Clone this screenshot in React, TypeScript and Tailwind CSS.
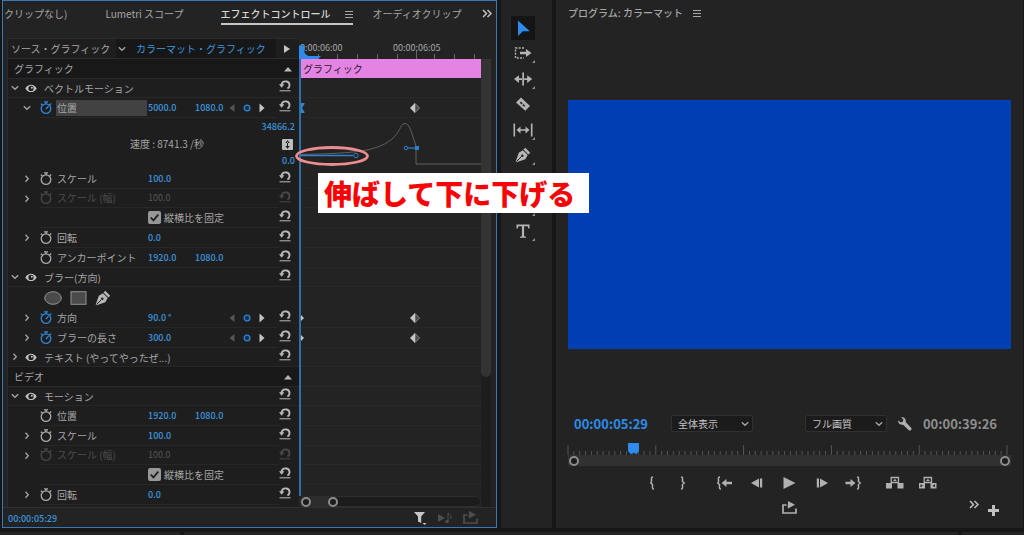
import React from "react";

type Kind = "header" | "section" | "prop" | "graph" | "check" | "masks";

interface Row {
  id: string;
  kind: Kind;
  label?: string;
  open?: boolean;
  arrow?: boolean;
  values?: string[];
  animated?: boolean;
  dim?: boolean;
  selected?: boolean;
  keys?: "bezier" | "linear";
}

const rows: Row[] = [
  { id: "g", kind: "header", label: "グラフィック" },
  { id: "vm", kind: "section", label: "ベクトルモーション", open: true },
  { id: "vpos", kind: "prop", label: "位置", open: true, arrow: true, values: ["5000.0", "1080.0"], animated: true, selected: true, keys: "bezier" },
  { id: "graph", kind: "graph" },
  { id: "vscale", kind: "prop", label: "スケール", arrow: true, values: ["100.0"] },
  { id: "vscalew", kind: "prop", label: "スケール (幅)", arrow: true, values: ["100.0"], dim: true },
  { id: "vlock", kind: "check", label: "縦横比を固定" },
  { id: "vrot", kind: "prop", label: "回転", arrow: true, values: ["0.0"] },
  { id: "vanchor", kind: "prop", label: "アンカーポイント", values: ["1920.0", "1080.0"] },
  { id: "blur", kind: "section", label: "ブラー(方向)", open: true },
  { id: "masks", kind: "masks" },
  { id: "bdir", kind: "prop", label: "方向", arrow: true, values: ["90.0 °"], animated: true, keys: "linear" },
  { id: "blen", kind: "prop", label: "ブラーの長さ", arrow: true, values: ["300.0"], animated: true, keys: "linear" },
  { id: "text", kind: "section", label: "テキスト (やってやったぜ...)" },
  { id: "v", kind: "header", label: "ビデオ" },
  { id: "motion", kind: "section", label: "モーション", open: true },
  { id: "mpos", kind: "prop", label: "位置", values: ["1920.0", "1080.0"] },
  { id: "mscale", kind: "prop", label: "スケール", arrow: true, values: ["100.0"] },
  { id: "mscalew", kind: "prop", label: "スケール (幅)", arrow: true, values: ["100.0"], dim: true },
  { id: "mlock", kind: "check", label: "縦横比を固定" },
  { id: "mrot", kind: "prop", label: "回転", arrow: true, values: ["0.0"] },
  { id: "manchor", kind: "prop" },
];

function rowHeight(r: Row) {
  if (r.kind === "graph") return "h-[51px]";
  if (r.kind === "masks") return "h-[21px]";
  if (r.kind === "section" || r.dim) return "h-[19px]";
  return "h-5";
}

const Chevron = ({ open }: { open?: boolean }) => (
  <svg viewBox="0 0 12 12" className="size-3 shrink-0" fill="none" stroke="#a6a6a6" strokeWidth="1.3">
    {open ? <path d="M2.8 4.3 6 7.3l3.2-3" /> : <path d="M4.5 2.8 7.3 5.8 4.5 8.8" />}
  </svg>
);

const Eye = () => (
  <svg viewBox="0 0 12 12" className="size-3" fill="none">
    <path d="M.3 6.4C3 1.6 9 1.6 11.700 6.400 9 11.200 3 11.200 .3 6.400Z" fill="#c2c2c2" />
    <circle cx="6" cy="6.400" r="2.600" fill="#1d1d1d" />
    <circle cx="6.800" cy="5.800" r="1" fill="#c2c2c2" />
  </svg>
);

const Stopwatch = ({ on }: { on?: boolean }) => (
  <svg viewBox="0 0 12 14" className="h-3.5 w-3" fill="none" stroke={on ? "#2f86d6" : "#a9a9a9"} strokeWidth="1.3">
    <circle cx="6" cy="7.600" r="4.800" />
    <path d="M4 .9h4M6 .9v2M.8 2.700l1.700 1.300M9.600 4 11.200 2.600" />
    {on && <path d="M6 8 8.500 5.300" />}
  </svg>
);

const Reset = ({ dim }: { dim?: boolean }) => (
  <svg viewBox="0 0 12 12" className="size-3" fill="none" stroke={dim ? "#484848" : "#b8b8b8"} strokeWidth="1.4">
    <path d="M2.300 5C3 2.300 5.200 1 7.600 1.500 11 2.300 11.600 6.700 8.400 8.500" strokeWidth="1.900" />
    <path d="M0 4.200h5.400L2.600 7.800Z" fill={dim ? "#484848" : "#b8b8b8"} stroke="none" />
    <path d="M.5 10.800h11" strokeWidth="1" />
  </svg>
);

const KeyNav = () => (
  <div className="flex items-center justify-between">
    <button aria-label="前のキーフレーム">
      <svg viewBox="0 0 6 10" className="h-2.5 w-1.5"><path d="M5.500 1v8L.5 5Z" fill="#555" /></svg>
    </button>
    <button aria-label="キーフレームを追加">
      <svg viewBox="0 0 8 8" className="size-2"><circle cx="4" cy="4" r="2.900" fill="#14304d" stroke="#2f86d6" strokeWidth="1.300" /></svg>
    </button>
    <button aria-label="次のキーフレーム">
      <svg viewBox="0 0 6 10" className="h-2.5 w-1.5"><path d="M.5 .500v9L5.500 5Z" fill="#c4c4c4" /></svg>
    </button>
  </div>
);

const Pen = ({ className }: { className?: string }) => (
  <svg viewBox="0 0 16 16" className={className}>
    <path d="M10.300 .800 15.200 5.700 13.400 7.500 8.500 2.600Z" fill="#b6b6b6" />
    <path d="M7.900 3.300 12.700 8.100 10.300 12.200 1.500 15.300 .7 14.500 3.800 5.700Z" fill="#b6b6b6" />
    <path d="M1.500 14.500 6.500 9.500" stroke="#202020" strokeWidth="1" />
    <circle cx="7.300" cy="8.700" r="1.200" fill="#202020" />
  </svg>
);

const ResetButton = ({ dim }: { dim?: boolean }) => (
  <button aria-label="リセット" className="pb-1" disabled={dim}>
    <Reset dim={dim} />
  </button>
);

function ListRow({ row }: { row: Row }) {
  const h = rowHeight(row);
  if (row.kind === "header") {
    return (
      <div className={`${h} flex shrink-0 items-center justify-between border-b border-[#292929] bg-[#181818] pl-1.5 pr-1.5`}>
        <span>{row.label}</span>
        <svg viewBox="0 0 10 6" className="h-1.5 w-2.5"><path d="M1 5.500h8L5 1Z" fill="#b8b8b8" /></svg>
      </div>
    );
  }
  if (row.kind === "section") {
    return (
      <div className={`${h} flex shrink-0 items-center border-b border-[#272727] pl-px pr-2`}>
        <button aria-label="展開" className="mr-1"><Chevron open={row.open} /></button>
        <button aria-label="表示" className="mr-[7px]"><Eye /></button>
        <span className="flex-1 whitespace-nowrap">{row.label}</span>
        <ResetButton />
      </div>
    );
  }
  if (row.kind === "graph") {
    return (
      <div className={`${h} flex shrink-0 items-stretch justify-between pl-[122px] pr-1`}>
        <div className="flex items-center">速度 : 8741.3 /秒</div>
        <div className="flex flex-col items-end justify-between pt-px text-[9px] font-medium leading-4 text-[#3d96de]">
          <span>34866.2</span>
          <svg viewBox="0 0 11 11" className="mr-0.5 size-[11px]">
            <rect width="11" height="11" rx="1" fill="#bdbdbd" />
            <path d="M5.500 1.300 3.300 4h4.400ZM5.500 9.700 3.300 7h4.400ZM5 3h1v5H5Z" fill="#1d1d1d" />
          </svg>
          <span>0.0</span>
        </div>
      </div>
    );
  }
  if (row.kind === "check") {
    return (
      <div className={`${h} flex shrink-0 items-center pl-8 pr-2`}>
        <div className="flex h-full flex-1 items-center border-b border-[#272727] pl-[108px]">
          <label className="flex items-center gap-[3px]">
            <span className="relative flex">
              <input type="checkbox" defaultChecked className="size-[13px] appearance-none rounded-[2px] bg-[#979797]" />
              <svg viewBox="0 0 12 12" className="pointer-events-none absolute inset-0 size-[13px]" fill="none" stroke="#1d1d1d" strokeWidth="1.600">
                <path d="M2.500 6 5 8.700 9.500 3.300" />
              </svg>
            </span>
            {row.label}
          </label>
        </div>
        <ResetButton />
      </div>
    );
  }
  if (row.kind === "masks") {
    return (
      <div className={`${h} flex shrink-0 items-center gap-2 pl-9`}>
        <button aria-label="楕円形マスク">
          <svg viewBox="0 0 18 14" className="h-3.5 w-[18px]"><ellipse cx="9" cy="7" rx="8.300" ry="6.300" fill="#4a4a4a" stroke="#929292" /></svg>
        </button>
        <button aria-label="長方形マスク">
          <svg viewBox="0 0 17 14" className="h-3.5 w-[17px]"><rect x="1" y=".7" width="15" height="12.600" fill="#4a4a4a" stroke="#929292" /></svg>
        </button>
        <button aria-label="ペンマスク"><Pen className="size-4" /></button>
      </div>
    );
  }
  return (
    <div className={`${h} flex shrink-0 items-center pl-[13px] pr-2 ${row.dim ? "text-[#4d4d4d]" : ""}`}>
      <div className="mr-[7px] size-3">
        {row.arrow && <button aria-label="展開" className="flex"><Chevron open={row.open} /></button>}
      </div>
      <div className="flex h-full flex-1 items-center border-b border-[#272727]">
        <button aria-label="アニメーションのオン/オフ" className={`mr-1 ${row.dim ? "opacity-30" : ""}`}>
          <Stopwatch on={row.animated} />
        </button>
        <span className={`w-[91px] whitespace-nowrap pl-px leading-4 ${row.selected ? "bg-[#424242]" : ""}`}>{row.label}</span>
        <div className={`flex flex-1 pl-px text-[9px] ${row.dim ? "text-[#555]" : "font-medium text-[#3d96de]"}`}>
          {row.values?.map((v, i) => (
            <button key={i} className="w-[47px] text-left leading-4">{v}</button>
          ))}
        </div>
      </div>
      {row.animated && <div className="-ml-12 mr-3.5 w-9"><KeyNav /></div>}
      <ResetButton dim={row.dim} />
    </div>
  );
}

const Diamond = () => (
  <svg viewBox="0 0 10 10" className="absolute left-[111px] top-[5px] size-2.5">
    <path d="M5 .500 9.500 5 5 9.500Z" fill="#4a4a4a" stroke="#8c8c8c" />
    <path d="M5 0 0 5l5 5Z" fill="#c6c6c6" />
  </svg>
);

function TimelineRow({ row }: { row: Row }) {
  const h = rowHeight(row);
  if (row.id === "g") {
    return (
      <div className={`${h} shrink-0 pb-px`}>
        <div className="flex h-full items-center border-l-2 border-[#8f96ea] bg-[#e583e5] pl-0.5 text-[#2b1a2b]">{row.label}</div>
      </div>
    );
  }
  if (row.kind === "graph") {
    return (
      <div className={`${h} shrink-0`}>
        <svg viewBox="0 0 182 50" className="h-[50px] w-full" preserveAspectRatio="xMinYMin slice" fill="none">
          <path d="M1 36.500C28 36 50 35 66 32.500 82 29 92 24 98 15.500 102 9.500 103 5.500 106 5.500 110 5.500 112 13 114 19L117 28V46H182" stroke="#707070" strokeWidth=".8" />
          <path d="M1 37.500h53" stroke="#2f7fca" strokeWidth="1.400" />
          <circle cx="57" cy="37.500" r="2.200" stroke="#2f7fca" fill="#232323" />
          <circle cx="107" cy="30" r="1.800" stroke="#2f7fca" />
          <path d="M109 30h8" stroke="#2f7fca" strokeWidth="1.200" />
          <rect x="116" y="28" width="4" height="4" fill="#2f7fca" />
        </svg>
      </div>
    );
  }
  return (
    <div className={`${h} relative shrink-0 ${row.kind === "masks" ? "" : "border-b border-[#282828]"}`}>
      {row.keys && <Diamond />}
      {row.keys === "linear" && (
        <svg viewBox="0 0 5 10" className="absolute left-px top-[5px] h-2.5 w-[5px]"><path d="M0 1v8l4-4Z" fill="#c6c6c6" /></svg>
      )}
      {row.keys === "bezier" && (
        <svg viewBox="0 0 6 12" className="absolute left-0 top-1 h-3 w-1.5"><path d="M0 1h5.500v1L3 6l2.500 4v1H0Z" fill="#2f86d6" /></svg>
      )}
    </div>
  );
}

const minorTicks = [19, 38, 58, 78, 98, 135, 155, 175];

function EffectControls() {
  return (
    <section className="relative flex min-h-0 flex-col overflow-hidden border border-[#3878b4] bg-[#232323]">
      <nav className="flex h-[37px] shrink-0 items-start overflow-hidden whitespace-nowrap pl-px pr-[3px] pt-1">
        <button className="leading-[18px]">クリップなし)</button>
        <button className="ml-[38px] leading-[18px]">Lumetri スコープ</button>
        <div className="ml-[37px] flex w-[132px] shrink-0 items-center justify-between border-b-2 border-[#c6c6c6] text-[#d6d6d6]">
          <button className="leading-[18px] font-medium">エフェクトコントロール</button>
          <button aria-label="パネルメニュー"><Menu /></button>
        </div>
        <button className="ml-5 w-[90px] overflow-hidden text-left leading-[18px]">オーディオクリップ</button>
        <button aria-label="その他のパネル" className="ml-auto flex h-[17px] items-center"><DoubleChevron /></button>
      </nav>

      <div className="flex min-h-0 flex-[1_1_0px] border-b border-[#303030] pl-1 pr-[5px]">
        <div className="flex w-[292px] shrink-0 flex-col overflow-hidden border-l border-t border-[#2b2b2b] bg-[#1e1e1e]">
          <div className="flex h-5 shrink-0 items-center border-b border-[#2b2b2b]">
            <button className="w-[108px] whitespace-nowrap pl-[3px] text-left">ソース・グラフィック</button>
            <button className="flex h-full w-40 items-center gap-2 whitespace-nowrap bg-[#171717] text-[#3d96de]">
              <Chevron open />
              カラーマット・グラフィック
            </button>
            <button aria-label="タイムラインを表示" className="ml-2">
              <svg viewBox="0 0 6 10" className="h-2.5 w-1.5"><path d="M0 1v8l6-4Z" fill="#c6c6c6" /></svg>
            </button>
          </div>
          <div className="flex min-h-0 flex-[1_1_0px] flex-col overflow-hidden">
            {rows.map((r) => <ListRow key={r.id} row={r} />)}
          </div>
        </div>

        <div className="flex min-w-0 flex-1 flex-col">
          <div className="relative h-[21px] shrink-0 overflow-hidden text-[9px] leading-4">
            <svg className="absolute inset-0 h-full w-full" stroke="#666">
              {minorTicks.map((x) => <path key={x} d={`M${x}.5 16v5`} />)}
              <path d="M117.500 13v8" />
            </svg>
            <span className="absolute left-px top-0.5">0:00:06:00</span>
            <span className="absolute left-[94px] top-0.5">00:00:06:05</span>
            <svg viewBox="0 0 24 14" className="absolute bottom-0 left-0 h-3.5 w-6">
              <path d="M0 .500h5.500V8L9 11h13l-3 3H0Z" fill="#2d8ceb" />
            </svg>
          </div>
          <div className="relative flex min-h-0 flex-[1_1_0px] flex-col overflow-hidden">
            {rows.map((r) => <TimelineRow key={r.id} row={r} />)}
            <div className="absolute bottom-[11px] left-0 top-0 w-0.5 bg-[#2f6ea8]" />
            <div className="absolute inset-x-0 bottom-0 flex h-[11px] items-center rounded-full border border-[#2e2e2e] bg-[#1c1c1c]">
              <div className="flex w-[38px] items-center justify-between rounded-full bg-[#2c2c2c] pl-px">
                <Ring /><Ring />
              </div>
            </div>
          </div>
        </div>

        <div className="w-2.5 shrink-0 pt-[21px]">
          <div className="h-full bg-[#1d1d1d]">
            <div className="h-[318px] rounded-b-full bg-[#333]" />
          </div>
        </div>
      </div>

      <footer className="flex h-[19px] shrink-0 items-center justify-between pl-[5px] pr-[18px]">
        <span className="pt-0.5 text-[9px] font-medium text-[#3d96de]">00:00:05:29</span>
        <div className="flex items-center gap-2.5">
          <button aria-label="フィルター">
            <svg viewBox="0 0 14 14" className="size-3.5" fill="#c6c6c6"><path d="M1 1h11L8.200 5.500V12L5 10.500V5.500ZM9.500 12h4l-2 2Z" /></svg>
          </button>
          <button aria-label="オーディオを再生">
            <svg viewBox="0 0 16 12" className="h-3 w-4" fill="#4e4e4e"><path d="M1 2v8l7-4Z" /><circle cx="10" cy="9.500" r="1.800" /><path d="M11 1v8.500M11 1l3 3v3" stroke="#4e4e4e" fill="none" /></svg>
          </button>
          <button aria-label="書き出し"><Export color="#4e4e4e" /></button>
        </div>
      </footer>

      <svg viewBox="0 0 76 22" className="pointer-events-none absolute left-[291px] top-[144px] h-[22px] w-[76px]" fill="none">
        <ellipse cx="38" cy="11" rx="35.500" ry="8.500" stroke="#ee8d8d" strokeWidth="2.800" />
      </svg>
    </section>
  );
}

const Menu = () => (
  <svg viewBox="0 0 8 8" className="size-2" stroke="#a8a8a8"><path d="M0 1.500h8M0 4.500h8M0 7.500h8" /></svg>
);

const DoubleChevron = () => (
  <svg viewBox="0 0 11 9" className="h-[9px] w-[11px]" fill="none" stroke="#c0c0c0" strokeWidth="1.500"><path d="M1 1l3.500 3.500L1 8M5.500 1 9 4.500 5.500 8" /></svg>
);

const Ring = () => <span className="block size-2.5 rounded-full border-2 border-[#8c8c8c] bg-[#1c1c1c]" />;

const Export = ({ color }: { color: string }) => (
  <svg viewBox="0 0 15 13" className="h-[13px] w-[15px]" fill="none">
    <path d="M4.500 4H1v8h13V7.500" stroke={color} strokeWidth="1.700" />
    <path d="M6 0v3.200C5.500 4 5.500 5 6 7.500L13 3.700Z" fill={color} />
  </svg>
);

const toolIcons: { name: string; icon: React.ReactNode; more?: boolean }[] = [
  { name: "選択ツール", icon: <path d="M5 2.500v15.500l4.800-4.800h7Z" fill="#2d8ceb" /> },
  {
    name: "トラックの前方選択ツール",
    more: true,
    icon: (
      <>
        <path d="M11 5H2.500v10H11" fill="none" stroke="#b4b4b4" strokeWidth="1.400" strokeDasharray="2 1.300" />
        <path d="M7 8.700h6V6l5.500 4-5.500 4v-2.700H7Z" fill="#b4b4b4" />
      </>
    ),
  },
  {
    name: "リップルツール",
    more: true,
    icon: <path d="M9.300 3.500h1.700v13H9.300ZM1 10l5-3.800v3h3v1.700H6v3ZM19.200 10l-5-3.800v3h-3v1.700h3v3Z" fill="#b4b4b4" />,
  },
  {
    name: "レーザーツール",
    icon: (
      <>
        <path d="M8 3.500 17 12 12.300 16.800 3 8.500Z" fill="#b4b4b4" />
        <path d="M7.300 8.200 12.500 13" stroke="#232323" strokeWidth="1.600" strokeDasharray="2.500 1" />
      </>
    ),
  },
  {
    name: "スリップツール",
    more: true,
    icon: <path d="M.5 3.500h1.600v13H.5ZM17.900 3.500h1.600v13h-1.600ZM3.500 10l4-3.500v2.700h5V6.500L16.500 10l-4 3.500v-2.700h-5v2.700Z" fill="#b4b4b4" />,
  },
  { name: "ペンツール", more: true, icon: <svg x="2" y="2" width="16" height="16"><Pen /></svg> },
  { name: "長方形ツール", more: true, icon: <rect x="4" y="5" width="12" height="10" fill="none" stroke="#b4b4b4" strokeWidth="1.500" /> },
  { name: "手のひらツール", more: true, icon: <path d="M5 10V6h2V4h2V3h2v1h2v2h2v7l-3 4H8l-4-5Z" fill="#b4b4b4" /> },
  { name: "横書き文字ツール", more: true, icon: <path d="M3.500 3.500h13v4h-1.300l-.5-2.300h-3.600v10l2 .5v1H6.900v-1l2-.5v-10H5.300L4.800 7.500H3.500Z" fill="#b4b4b4" /> },
];

function Tools() {
  return (
    <aside className="flex flex-col items-center bg-[#232323] pr-2 pt-4">
      <div className="flex h-[227px] flex-col items-center justify-between">
        {toolIcons.map((t, i) => (
          <button key={t.name} aria-label={t.name} className={`relative flex h-6 w-6 items-center justify-center ${i === 0 ? "bg-[#151515]" : ""}`}>
            <svg viewBox="0 0 20 20" className="size-5">{t.icon}</svg>
            {t.more && <svg viewBox="0 0 3 3" className="absolute bottom-0.5 right-0 size-[3px]"><path d="M3 0v3H0Z" fill="#909090" /></svg>}
          </button>
        ))}
      </div>
    </aside>
  );
}

function Dropdown({ label, value }: { label: string; value: string }) {
  return (
    <div className="relative flex w-[82px] items-center">
      <select aria-label={label} className="h-[17px] w-full appearance-none rounded-[2px] border border-[#303030] bg-[#1b1b1b] pl-1.5 text-[10px] leading-[15px] text-[#c2c2c2]">
        <option>{value}</option>
      </select>
      <div className="pointer-events-none absolute right-0.5"><Chevron open /></div>
    </div>
  );
}

const C = "#b0b0b0";

function TBtn({ label, w, children }: { label: string; w: string; children: React.ReactNode }) {
  return (
    <button aria-label={label} className={`flex h-4 items-center justify-center ${w}`}>
      <svg viewBox="0 0 20 14" className="h-3.5 w-5" fill={C}>{children}</svg>
    </button>
  );
}

const Brace = ({ x, flip }: { x: number; flip?: boolean }) => (
  <path
    d={flip ? `M${x - 1} 1q2 0 1.500 2.500v2l1.700 1.500-1.700 1.500v2q.5 2.500-1.500 2.500` : `M${x + 1} 1q-2 0-1.500 2.500v2L${x - 1.2} 7l1.700 1.500v2q-.5 2.500 1.500 2.500`}
    fill="none"
    stroke={C}
    strokeWidth="1.500"
  />
);

function Program() {
  return (
    <section className="flex min-w-0 flex-col bg-[#232323] px-3">
      <header className="flex items-center gap-2.5 pt-1">
        <h1 className="font-medium leading-[18px]">プログラム: カラーマット</h1>
        <button aria-label="パネルメニュー"><Menu /></button>
      </header>
      <div className="mt-[78px] aspect-video w-full bg-[#003eb4]" />
      <div className="mt-[66px] flex h-[17px] items-center justify-between pl-1.5 pr-3.5">
        <div className="flex items-center gap-[23px]">
          <span className="text-[13px] font-bold text-[#2d8ceb]">00:00:05:29</span>
          <Dropdown label="ズームレベルを選択" value="全体表示" />
        </div>
        <div className="flex items-center gap-[11px]">
          <Dropdown label="再生時の解像度" value="フル画質" />
          <button aria-label="設定">
            <svg viewBox="0 0 14 14" className="size-3.5" fill={C}>
              <path d="M3.200 .4 5.400 2.600 4.800 4.800 2.600 5.400 .4 3.200C-.3 6 2 8.300 5 7.700L10.800 13.300C12.500 14.300 14.200 12.500 13.300 10.900L7.700 5C8.300 2 6-.3 3.200 .4Z" />
            </svg>
          </button>
          <span className="text-[13px] font-bold text-[#8f8f8f]">00:00:39:26</span>
        </div>
      </div>
      <div className="relative mr-1 mt-[11px] h-3">
        <svg className="block h-3 w-full overflow-visible" stroke="#555">
          {Array.from({ length: 76 }, (_, i) => (
            <line key={i} x1={`${(i / 75) * 100}%`} x2={`${(i / 75) * 100}%`} y1={i % 15 === 0 ? 2 : 8} y2="12" />
          ))}
        </svg>
        <svg viewBox="0 0 11 12" className="absolute left-[60px] top-0 h-3 w-[11px]">
          <path d="M0 0h11v8L8 11.500 6.500 10h-2L3 11.500 0 8Z" fill="#2d8ceb" />
        </svg>
      </div>
      <div className="flex h-[11px] items-center justify-between bg-[#313131] px-px"><Ring /><Ring /></div>
      <div className="mt-[9px] flex justify-center pl-0.5">
        <div className="mr-3 flex">
          <TBtn label="インをマーク" w="w-[30px]"><Brace x={10} /></TBtn>
          <TBtn label="アウトをマーク" w="w-[30px]"><Brace x={10} flip /></TBtn>
        </div>
        <div className="mr-2.5 flex">
          <TBtn label="インへ移動" w="w-8"><Brace x={4} /><path d="M6.500 7 11.500 3v2.800H17v2.400h-5.500V11Z" /></TBtn>
          <TBtn label="前のフレーム" w="w-8"><path d="M4 7l8-4.500v9ZM13 2.500h2.200v9H13Z" /></TBtn>
          <TBtn label="再生" w="w-8"><path d="M4.500 1 16.500 7 4.500 13Z" /></TBtn>
          <TBtn label="次のフレーム" w="w-8"><path d="M17 7 9 2.500v9ZM5.800 2.500H8v9H5.800Z" /></TBtn>
          <TBtn label="アウトへ移動" w="w-8"><Brace x={15} flip /><path d="M12.500 7 7.500 3v2.800H2.500v2.400h5V11Z" /></TBtn>
        </div>
        <div className="flex">
          <TBtn label="リフト" w="w-[33px]">
            <path d="M1 7h6v5.500H1ZM12.500 7h6v5.500h-6Z" /><path d="M6.200 1.500h7.300v5H6.200Z" fill="#232323" stroke={C} strokeWidth="1.300" /><path d="M8 5l1.900-2.200L11.800 5Z" />
          </TBtn>
          <TBtn label="抽出" w="w-[33px]">
            <path d="M1 7h6v5.500H1ZM12.500 7h6v5.500h-6Z" /><path d="M6.200 1.500h7.300v5H6.200Z" fill="#232323" stroke={C} strokeWidth="1.300" /><path d="M8 5l1.900-2.200L11.800 5Z" /><path d="M2.500 8.200v3l2.500-1.500ZM17 8.200v3l-2.500-1.500Z" fill="#232323" />
          </TBtn>
        </div>
      </div>
      <div className="mt-2 grid grid-cols-[1fr_auto_1fr] items-center">
        <span />
        <button aria-label="フレームを書き出し"><Export color={C} /></button>
        <div className="flex items-center justify-end gap-2 pr-3">
          <button aria-label="その他のボタン" className="pb-1.5"><DoubleChevron /></button>
          <button aria-label="ボタンエディター" className="pt-1.5">
            <svg viewBox="0 0 11 11" className="size-[11px]" fill="#c0c0c0"><path d="M4 0h3v4h4v3H7v4H4V7H0V4h4Z" /></svg>
          </button>
        </div>
      </div>
    </section>
  );
}

export default function App() {
  return (
    <main
      lang="ja"
      className="relative flex min-h-screen flex-col overflow-hidden bg-[#161616] font-['Noto_Sans_CJK_JP',sans-serif] text-[10px] text-[#a6a6a6]"
    >
      <div className="grid flex-1 grid-cols-[minmax(0,495fr)_51px_minmax(0,467fr)] gap-x-1 pl-0.5 pr-px">
        <EffectControls />
        <Tools />
        <Program />
      </div>
      <div className="mt-1 flex h-[3px] gap-1">
        <div className="w-[180px] bg-[#232323]" />
        <div className="flex-1 bg-[#232323]" />
        <div className="w-[62px] bg-[#232323]" />
      </div>
      <p className="absolute left-[318px] top-[173px] flex h-10 w-[271px] items-center bg-white pl-1.5 text-[28px] font-black leading-10 whitespace-nowrap text-[#f50505]">
        伸ばして下に下げる
      </p>
    </main>
  );
}
